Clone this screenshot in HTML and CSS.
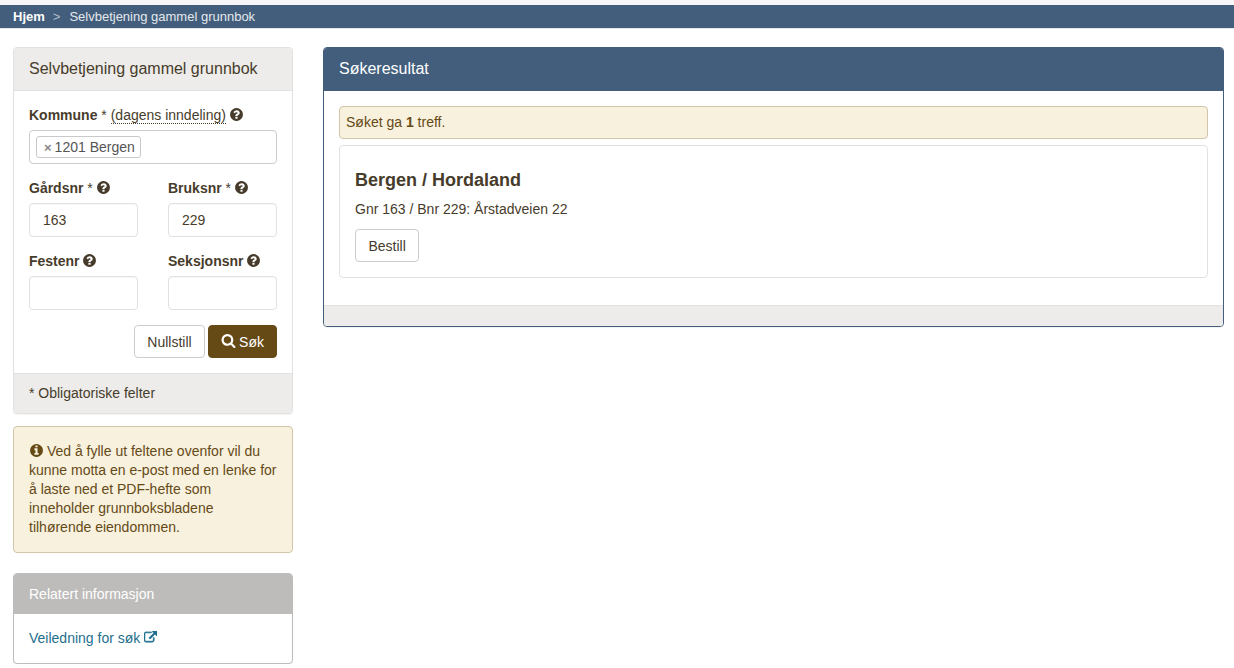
FILE: index.html
```html
<!DOCTYPE html>
<html lang="no"><head>
    <meta charset="utf-8">
    <title>Selvbetjening gammel grunnbok</title>
    <link rel="stylesheet" href="styles.css">
</head>
<body>
    <svg class="defs" width="0" height="0">
        <symbol id="i-help" viewBox="0 0 1792 1792"><path d="M1024 1376v-192q0-14-9-23t-23-9h-192q-14 0-23 9t-9 23v192q0 14 9 23t23 9h192q14 0 23-9t9-23zm256-672q0-88-55.5-163t-138.5-116-170-41q-243 0-371 213-15 24 8 42l132 100q7 6 19 6 16 0 25-12 53-68 86-92 34-24 86-24 48 0 85.5 26t37.5 59q0 38-20 61t-68 45q-63 28-115.5 86.5t-52.5 125.5v36q0 14 9 23t23 9h192q14 0 23-9t9-23q0-19 21.5-49.5t54.5-49.5q32-18 49-28.5t46-35 44.5-48 28-60.5 12.5-81zm384 192q0 209-103 385.5t-279.5 279.5-385.5 103-385.5-103-279.5-279.5-103-385.5 103-385.5 279.5-279.5 385.5-103 385.5 103 279.5 279.5 103 385.5z"/></symbol>
    </svg>

    <nav class="crumbs">
        <a class="crumb-home" href="#">Hjem</a>
        <span class="crumb-sep">&gt;</span>
        <span>Selvbetjening gammel grunnbok</span>
    </nav>

    <div class="page">
        <div class="side">
            <form class="panel panel-form">
                <div class="panel-head">Selvbetjening gammel grunnbok</div>
                <div class="panel-body">
                    <div class="field">
                        <label class="lbl"><b>Kommune</b> * <span class="abbr">(dagens inndeling)</span> <svg class="ico"><use href="#i-help"/></svg></label>
                        <div class="select"><span class="tag"><span class="tag-x">×</span>1201 Bergen</span></div>
                    </div>
                    <div class="grid">
                        <div class="field">
                            <label class="lbl"><b>Gårdsnr</b> * <svg class="ico"><use href="#i-help"/></svg></label>
                            <input class="inp" type="text" value="163">
                        </div>
                        <div class="field">
                            <label class="lbl"><b>Bruksnr</b> * <svg class="ico"><use href="#i-help"/></svg></label>
                            <input class="inp" type="text" value="229">
                        </div>
                        <div class="field">
                            <label class="lbl"><b>Festenr</b> <svg class="ico"><use href="#i-help"/></svg></label>
                            <input class="inp" type="text">
                        </div>
                        <div class="field">
                            <label class="lbl"><b>Seksjonsnr</b> <svg class="ico"><use href="#i-help"/></svg></label>
                            <input class="inp" type="text">
                        </div>
                    </div>
                    <div class="actions">
                        <button class="btn" type="button">Nullstill</button>
                        <button class="btn btn-brown" type="button"><svg class="ico-search" viewBox="0 0 1792 1792"><path d="M1216 832q0-185-131.5-316.5t-316.5-131.5-316.5 131.5-131.5 316.5 131.5 316.5 316.5 131.5 316.5-131.5 131.5-316.5zm512 832q0 52-38 90t-90 38q-54 0-90-38l-343-342q-179 124-399 124-143 0-273.5-55.5t-225-150-150-225-55.5-273.5 55.5-273.5 150-225 225-150 273.5-55.5 273.5 55.5 225 150 150 225 55.5 273.5q0 220-124 399l343 343q37 37 37 90z"/></svg>Søk</button>
                    </div>
                </div>
                <div class="panel-foot">* Obligatoriske felter</div>
            </form>

            <div class="alert alert-info">
                <svg class="ico ico-info" viewBox="0 0 1792 1792"><path d="M1152 1376v-160q0-14-9-23t-23-9h-96v-512q0-14-9-23t-23-9h-320q-14 0-23 9t-9 23v160q0 14 9 23t23 9h96v320h-96q-14 0-23 9t-9 23v160q0 14 9 23t23 9h448q14 0 23-9t9-23zm-128-896v-160q0-14-9-23t-23-9h-192q-14 0-23 9t-9 23v160q0 14 9 23t23 9h192q14 0 23-9t9-23zm640 416q0 209-103 385.5t-279.5 279.5-385.5 103-385.5-103-279.5-279.5-103-385.5 103-385.5 279.5-279.5 385.5-103 385.5 103 279.5 279.5 103 385.5z"/></svg>
                Ved å fylle ut feltene ovenfor vil du kunne motta en e-post med en lenke for å laste ned et PDF-hefte som inneholder grunnboksbladene tilhørende eiendommen.
            </div>

            <div class="panel panel-grey">
                <div class="panel-head">Relatert informasjon</div>
                <div class="panel-body">
                    <a class="link" href="#">Veiledning for søk <svg class="ico ico-ext" viewBox="0 0 1792 1792"><path d="M1408 928v320q0 119-84.5 203.5t-203.5 84.5h-832q-119 0-203.5-84.5t-84.5-203.5v-832q0-119 84.5-203.5t203.5-84.5h704q14 0 23 9t9 23v64q0 14-9 23t-23 9h-704q-66 0-113 47t-47 113v832q0 66 47 113t113 47h832q66 0 113-47t47-113v-320q0-14 9-23t23-9h64q14 0 23 9t9 23zm384-864v512q0 26-19 45t-45 19-45-19l-176-176-652 652q-10 10-23 10t-23-10l-114-114q-10-10-10-23t10-23l652-652-176-176q-19-19-19-45t19-45 45-19h512q26 0 45 19t19 45z"/></svg></a>
                </div>
            </div>
        </div>

        <div class="main">
            <div class="panel panel-blue">
                <div class="panel-head">Søkeresultat</div>
                <div class="panel-body">
                    <div class="alert alert-small">Søket ga <b>1</b> treff.</div>
                    <div class="result">
                        <h3>Bergen / Hordaland</h3>
                        <p>Gnr 163 / Bnr 229: Årstadveien 22</p>
                        <button class="btn" type="button">Bestill</button>
                    </div>
                </div>
                <div class="panel-foot"></div>
            </div>
        </div>
    </div>
</body></html>
```

FILE: styles.css
```css
html{
    height: 100%;
    overflow: hidden;
}
body{
    margin: 0;
    padding-top: 5px;
    background: linear-gradient(#f7f7f7 5px, #fff 5px);
    font-family: "Liberation Sans", Arial, sans-serif;
    font-size: 14px;
    line-height: 20px;
    color: #473c2b;
}
.defs{
    position: absolute;
}

.crumbs{
    height: 23px;
    padding-left: 13px;
    display: flex;
    align-items: center;
    background: #425e7c;
    border-bottom: 1px solid #e8e8e8;
    font-size: 13px;
    color: #e4e8ec;
}
.crumb-home{
    color: #fff;
    font-weight: bold;
    text-decoration: none;
}
.crumb-sep{
    margin: 0 9px 0 8px;
    color: #b5bfca;
}

.page{
    display: flex;
    gap: 30px;
    padding: 18px 10px 0 13px;
}
.side{
    width: 280px;
    flex: none;
}
.main{
    flex: 1;
}

.panel{
    background: #fff;
    border: 1px solid #e3e2e0;
    border-radius: 4px;
    box-shadow: 0 1px 1px rgba(0,0,0,.05);
}
.panel-head{
    height: 42px;
    padding: 0 15px;
    display: flex;
    align-items: center;
    background: #edecea;
    border-bottom: 1px solid #e3e2e0;
    border-radius: 3px 3px 0 0;
    font-size: 16px;
}
.panel-body{
    padding: 15px;
}
.panel-foot{
    padding: 9px 15px 10px;
    background: #edecea;
    border-top: 1px solid #e3e2e0;
    border-radius: 0 0 3px 3px;
}

.panel-form .panel-body{
    padding: 14px 15px 15px;
}
.field{
    margin-bottom: 14px;
}
.lbl{
    display: block;
    margin-bottom: 5px;
    white-space: nowrap;
}
.abbr{
    border-bottom: 1px dotted #473c2b;
}
.ico{
    width: 15px;
    height: 15px;
    margin: 0 -1px;
    fill: #473c2b;
    vertical-align: -2px;
}
.select{
    height: 34px;
    box-sizing: border-box;
    padding: 5px 6px;
    border: 1px solid #ccc;
    border-radius: 4px;
}
.tag{
    display: inline-block;
    height: 20px;
    line-height: 20px;
    padding: 0 5px 0 7px;
    border: 1px solid #c9c9c9;
    border-radius: 3px;
    color: #555;
}
.tag-x{
    margin-right: 3px;
    color: #888;
    font-weight: bold;
    font-size: 13px;
}
.grid{
    display: grid;
    grid-template-columns: 109px 109px;
    column-gap: 30px;
}
.inp{
    display: block;
    width: 100%;
    height: 34px;
    box-sizing: border-box;
    padding: 6px 13px;
    border: 1px solid #e1e1e1;
    border-radius: 4px;
    background: #fff;
    box-shadow: inset 0 1px 1px rgba(0,0,0,.03);
    font: inherit;
    color: #473c2b;
}
.actions{
    display: flex;
    justify-content: flex-end;
    gap: 3px;
    margin-top: 1px;
}
.btn{
    height: 33px;
    padding: 0 12.5px;
    background: #fff;
    border: 1px solid #ccc;
    border-radius: 4px;
    font: inherit;
    color: #473c2b;
}
.btn-brown{
    display: flex;
    align-items: center;
    padding: 0 12px;
    background: #654a16;
    border-color: #654a16;
    color: #fff;
}
.ico-search{
    width: 15px;
    height: 15px;
    margin: 0 3px 2px 0;
    fill: #fff;
}

.alert{
    background: #f8f1de;
    border: 1px solid #d2c5ab;
    border-radius: 4px;
    color: #654a16;
}
.alert-info{
    margin: 12px 0 20px;
    padding: 15px 15px 15px;
    line-height: 19px;
}
.ico-info{
    margin: 0 -1px 0 0;
    fill: #654a16;
}
.alert-small{
    box-sizing: border-box;
    height: 33px;
    padding: 5px 6px;
    line-height: 21px;
    margin-bottom: 6px;
}

.panel-grey{
    border-color: #bdbcba;
}
.panel-grey .panel-head{
    height: 40px;
    background: #bdbcba;
    border: 0;
    font-size: 14px;
    color: #fff;
}
.panel-grey .panel-body{
    padding: 14px 15px 15px;
}
.link{
    color: #1f6f8e;
    text-decoration: none;
}
.ico-ext{
    width: 13px;
    height: 13px;
    margin: 0;
    fill: #1f6f8e;
    stroke: #1f6f8e;
    stroke-width: 90;
    vertical-align: -1px;
}

.panel-blue{
    border-color: #425e7c;
}
.panel-blue .panel-head{
    background: #425e7c;
    border-color: #425e7c;
    color: #fff;
}
.panel-blue .panel-body{
    padding: 15px 15px 27px;
}
.panel-blue .panel-foot{
    height: 20px;
    padding: 0;
}
.result{
    padding: 15px;
    border: 1px solid #e3e2e0;
    border-radius: 4px;
}
.result h3{
    margin: 9px 0 9px;
    font-size: 18px;
    line-height: 20px;
}
.result p{
    margin: 0 0 10px;
}
```
